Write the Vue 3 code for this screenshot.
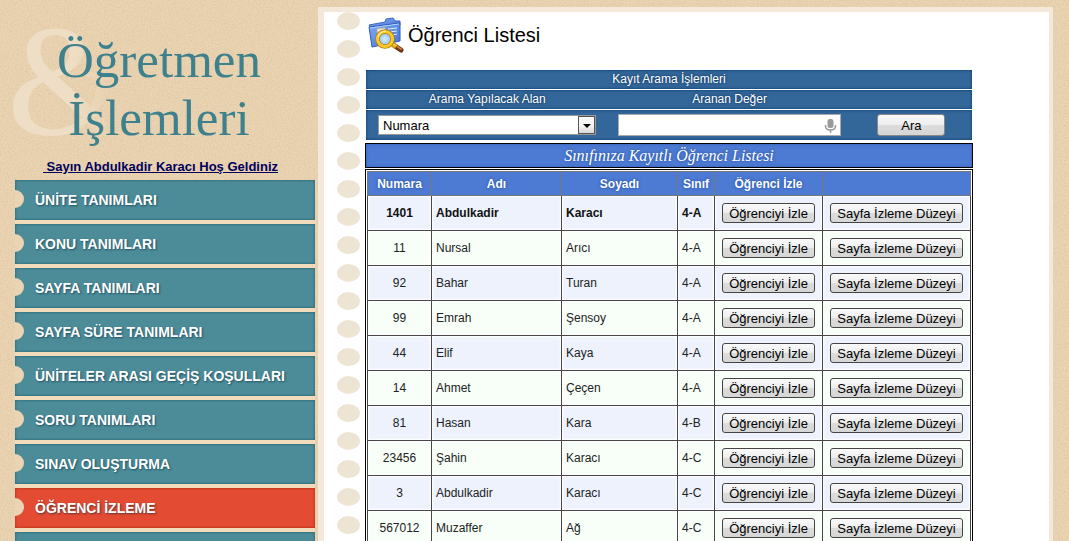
<script setup>
import { ref } from 'vue'

const menu = [
  'ÜNİTE TANIMLARI',
  'KONU TANIMLARI',
  'SAYFA TANIMLARI',
  'SAYFA SÜRE TANIMLARI',
  'ÜNİTELER ARASI GEÇİŞ KOŞULLARI',
  'SORU TANIMLARI',
  'SINAV OLUŞTURMA',
  'ÖĞRENCİ İZLEME'
]
const active = 'ÖĞRENCİ İZLEME'

const students = [
  ['1401', 'Abdulkadir', 'Karacı', '4-A'],
  ['11', 'Nursal', 'Arıcı', '4-A'],
  ['92', 'Bahar', 'Turan', '4-A'],
  ['99', 'Emrah', 'Şensoy', '4-A'],
  ['44', 'Elif', 'Kaya', '4-A'],
  ['14', 'Ahmet', 'Çeçen', '4-A'],
  ['81', 'Hasan', 'Kara', '4-B'],
  ['23456', 'Şahin', 'Karacı', '4-C'],
  ['3', 'Abdulkadir', 'Karacı', '4-C'],
  ['567012', 'Muzaffer', 'Ağ', '4-C']
]

const field = ref('Numara')
const query = ref('')
</script>

<template>
  <div class="page">
    <svg class="grain" aria-hidden="true">
      <filter id="grain">
        <feTurbulence type="fractalNoise" baseFrequency="0.7" numOctaves="2" seed="4" />
        <feColorMatrix values="0 0 0 0 0.62  0 0 0 0 0.45  0 0 0 0 0.25  0.9 0 0 0 -0.36" />
      </filter>
      <rect width="100%" height="100%" filter="url(#grain)" />
    </svg>

    <aside class="side">
      <header class="brand">
        <span class="amp" aria-hidden="true">&amp;</span>
        <h1>Öğretmen<br />İşlemleri</h1>
      </header>
      <a class="welcome" href="#">&nbsp;Sayın Abdulkadir Karacı Hoş Geldiniz</a>
      <ul class="menu">
        <li v-for="m in menu" :key="m">
          <a href="#" :class="{ active: m === active }">{{ m }}</a>
        </li>
        <li><span class="blank"></span></li>
      </ul>
    </aside>

    <main class="sheet">
      <div class="holes" aria-hidden="true">
        <i v-for="n in 19" :key="n"></i>
      </div>
      <div class="content">
        <h2>
          <svg class="folder" viewBox="0 0 36 36" aria-hidden="true">
            <defs>
              <linearGradient id="fb" x1="0" y1="0" x2="1" y2="1">
                <stop offset="0" stop-color="#86b0f4" />
                <stop offset="1" stop-color="#3f6fd0" />
              </linearGradient>
              <linearGradient id="ff" x1="0" y1="0" x2="1" y2="1">
                <stop offset="0" stop-color="#7fabf2" />
                <stop offset="1" stop-color="#4474d6" />
              </linearGradient>
              <radialGradient id="gl">
                <stop offset="0" stop-color="#d4edff" />
                <stop offset="1" stop-color="#85bdf2" />
              </radialGradient>
            </defs>
            <path d="M1 8l16-3 1-3 7-1 2 3 5 0v4L3 12z" fill="url(#fb)" stroke="#3c66c4" />
            <path d="M1 10l31-4v18L4 30z" fill="url(#ff)" stroke="#3159b8" />
            <path d="M2 11l29-4" stroke="#b4d0fb" />
            <path d="M9 12l8-1 1 8-8 2z" fill="#f5ead0" stroke="#d6bf86" stroke-width=".6" />
            <path d="M11 17l3-4 3 4z" fill="#d8943c" />
            <path d="M20 12l9-1M21 15l8-1M24 18l5-1" stroke="#e2eeff" stroke-width="1" />
            <path d="M27 29l6 4" stroke="#6d3613" stroke-width="5" stroke-linecap="round" />
            <path d="M27 28l6 4" stroke="#c7803d" stroke-width="2" stroke-linecap="round" />
            <path d="M23 26l5 4" stroke="#d99a12" stroke-width="5" />
            <path d="M23 26l5 3" stroke="#fbd545" stroke-width="2" />
            <circle cx="17" cy="22" r="7.5" fill="url(#gl)" stroke="#b87a0c" stroke-width="4.6" />
            <circle cx="17" cy="22" r="7.5" fill="none" stroke="#f9ca2c" stroke-width="3" />
            <path d="M10 20a7.500 7.500 0 0 1 8-5.500" fill="none" stroke="#fff3a0" stroke-width="1.200" />
          </svg>
          Öğrenci Listesi
        </h2>

        <form class="search" @submit.prevent>
          <div class="bar title">Kayıt Arama İşlemleri</div>
          <div class="bar labels">
            <label for="field">Arama Yapılacak Alan</label>
            <label for="query">Aranan Değer</label>
          </div>
          <div class="bar inputs">
            <div class="selectbox">
              <select id="field" v-model="field">
                <option>Numara</option>
              </select>
              <span class="drop" aria-hidden="true"></span>
            </div>
            <div class="query">
              <input id="query" v-model="query" type="text" />
              <svg viewBox="0 0 12 16" aria-hidden="true">
                <rect x="3" y="1" width="6" height="9" rx="2.500" fill="#999" />
                <path d="M1 7v1c0 3 2 4 5 4s5-1 5-4V7M6 12v3" fill="none" stroke="#999" stroke-width="1.500" />
              </svg>
            </div>
            <div class="go"><button type="submit">Ara</button></div>
          </div>
        </form>

        <h3>Sınıfınıza Kayıtlı Öğrenci Listesi</h3>

        <div class="frame">
          <table>
            <colgroup>
              <col class="c-no" /><col class="c-name" /><col class="c-last" />
              <col class="c-class" /><col class="c-watch" /><col />
            </colgroup>
            <thead>
              <tr>
                <th>Numara</th>
                <th>Adı</th>
                <th>Soyadı</th>
                <th>Sınıf</th>
                <th>Öğrenci İzle</th>
                <th></th>
              </tr>
            </thead>
            <tbody>
              <tr v-for="s in students" :key="s[0]">
                <td class="num">{{ s[0] }}</td>
                <td>{{ s[1] }}</td>
                <td>{{ s[2] }}</td>
                <td>{{ s[3] }}</td>
                <td class="act"><button type="button">Öğrenciyi İzle</button></td>
                <td class="act"><button type="button">Sayfa İzleme Düzeyi</button></td>
              </tr>
            </tbody>
          </table>
        </div>
      </div>
    </main>
  </div>
</template>

<style>
body {
  margin: 0;
  background: #ead4b3;
}
</style>

<style scoped>
* {
  box-sizing: border-box;
}
.page {
  position: relative;
  display: flex;
  height: 100vh;
  overflow: hidden;
  padding: 7px 16px 0 15px;
  gap: 3px;
  background: #ead4b3;
  font-family: "Liberation Sans", Arial, sans-serif;
  font-size: 12px;
}
.grain {
  position: absolute;
  inset: 0;
  width: 100%;
  height: 100%;
}
.side {
  position: relative;
  flex: 0 0 300px;
}
.brand {
  position: relative;
  padding-top: 24px;
}
.amp {
  position: absolute;
  left: -8px;
  top: -10px;
  color: #eedec5;
  font: 158px/168px "Liberation Serif", serif;
  -webkit-mask-image: linear-gradient(90deg, #000 64px, transparent 104px);
  mask-image: linear-gradient(90deg, #000 64px, transparent 104px);
}
h1 {
  position: relative;
  margin: 0 0 11px;
  padding-right: 12px;
  color: #3e818d;
  font: 51px/58px "Liberation Serif", serif;
  text-align: center;
}
.welcome {
  display: block;
  width: max-content;
  margin: 0 auto;
  padding-right: 9px;
  color: #00005c;
  font-size: 13px;
  font-weight: bold;
  line-height: 18px;
}
.menu {
  margin: 4px 0 0;
  padding: 0;
  list-style: none;
  background: #f0dcbc;
}
.menu li {
  margin-bottom: 4px;
}
.menu a,
.menu .blank {
  position: relative;
  display: block;
  height: 40px;
  padding-left: 20px;
  overflow: hidden;
  background: #4c8c99;
  box-shadow: inset 0 0 3px #1e5c69;
  color: #fff;
  font-size: 14px;
  font-weight: bold;
  line-height: 40px;
  text-decoration: none;
  text-shadow: 1px 1px 2px rgba(0, 40, 60, 0.6);
}
.menu a::before {
  content: "";
  position: absolute;
  left: -9px;
  top: 10px;
  width: 18px;
  height: 18px;
  border-radius: 50%;
  background: #ead4b3;
}
.menu a.active {
  background: #e34b32;
  box-shadow: inset 0 0 3px #a52713;
}
.sheet {
  position: relative;
  flex: 1;
  display: flex;
  align-items: flex-start;
  min-height: 534px;
  padding-left: 13px;
  border: solid #f3e8d9;
  border-width: 5px 4px 0 6px;
  background: #fff;
}
.holes {
  display: grid;
  gap: 10px;
  flex: 0 0 23px;
}
.holes i {
  height: 18px;
  border-radius: 50%;
  background: #eee4d3;
}
.content {
  flex: 1;
  min-width: 0;
  padding: 5px 76px 0 5px;
}
h2 {
  display: flex;
  align-items: center;
  gap: 4px;
  height: 36px;
  margin: 0 0 17px 3px;
  font-size: 20px;
  font-weight: normal;
}
.folder {
  width: 36px;
  height: 36px;
}
.search {
  display: grid;
  gap: 1px;
  margin: 0 1px;
  color: #fff;
}
.bar {
  height: 19px;
  background: #336699;
  box-shadow: inset 0 0 3px #003366;
  line-height: 19px;
  text-align: center;
  text-shadow: 0 0 3px #002850;
}
.labels,
.inputs {
  display: grid;
  grid-template-columns: 40% 40% 20%;
}
.inputs {
  height: 30px;
  align-items: center;
}
.selectbox {
  position: relative;
  margin: 0 12px;
}
select {
  display: block;
  width: 100%;
  height: 20px;
  padding: 0 4px;
  appearance: none;
  border: 1px solid #999;
  border-radius: 0;
  background: #fff;
  color: #000;
  font: 13px "Liberation Sans", Arial, sans-serif;
}
.drop {
  position: absolute;
  right: 1px;
  top: 1px;
  width: 17px;
  height: 18px;
  border: 1px solid #555;
  background: linear-gradient(#f6f6f6 50%, #d8d8d8);
  pointer-events: none;
}
.drop::after {
  content: "";
  position: absolute;
  left: 4px;
  top: 7px;
  border: solid transparent;
  border-width: 4px 4px 0;
  border-top-color: #000;
}
.query {
  position: relative;
  margin: 0 10px;
}
.query input {
  display: block;
  width: 100%;
  height: 22px;
  padding: 0 20px 0 4px;
  border: 1px solid #aaa;
  background: #fff;
  font: 13px "Liberation Sans", Arial, sans-serif;
}
.query svg {
  position: absolute;
  right: 4px;
  top: 4px;
  width: 13px;
  height: 16px;
}
button {
  height: 20px;
  padding: 0 6px;
  border: 1px solid #444;
  border-radius: 3px;
  background: linear-gradient(#fafafa, #ededed 50%, #dcdcdc 52%, #d6d6d6);
  color: #000;
  font: 13px "Liberation Sans", Arial, sans-serif;
  white-space: nowrap;
}
.go button {
  display: block;
  width: 68px;
  height: 22px;
  margin: 0 auto;
  border-color: #888;
}
h3 {
  height: 25px;
  margin: 3px 0 1px;
  border: 1px solid #000;
  background: #4d7ad2;
  box-shadow: inset 0 0 3px #2f5cb4;
  color: #fff;
  font: italic 16px/23px "Liberation Serif", serif;
  text-align: center;
  text-shadow: 0 0 3px #204a99;
}
.frame {
  padding: 1px;
  border: 1px solid #000;
}
table {
  width: 100%;
  table-layout: fixed;
  border-collapse: collapse;
}
.c-no { width: 64px; }
.c-name { width: 130px; }
.c-last { width: 116px; }
.c-class { width: 37px; }
.c-watch { width: 108px; }
th,
td {
  border: 1px solid #4a4648;
}
th {
  height: 24px;
  padding: 0;
  border-color: #77777c;
  background: #4d7ad2;
  color: #fff;
  font-size: 12px;
  text-shadow: 0 0 3px #204a99;
}
td {
  height: 35px;
  padding: 0 4px;
  background: #f8fff9;
  box-shadow: inset 0 0 2px 1px #fff;
  color: #222;
}
tbody tr:nth-child(odd) td {
  background: #edf2fd;
}
tbody tr:first-child td {
  color: #111;
  font-weight: bold;
}
td.num,
td.act {
  text-align: center;
}
td.act {
  padding: 0;
}
td.act button {
  display: block;
  margin: 0 auto;
}
</style>
